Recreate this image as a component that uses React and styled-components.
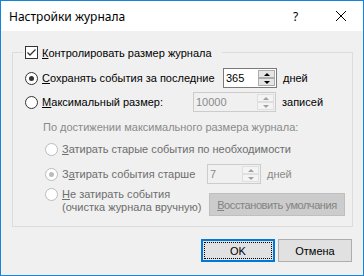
import React from "react";
import styled, { createGlobalStyle } from "styled-components";

const GlobalStyle = createGlobalStyle`
  html, body {
    margin: 0;
    padding: 0;
    background: #f0f0f0;
  }
  body {
    font-family: "Liberation Sans", Arial, sans-serif;
    font-size: 11px;
    color: #000;
  }
`;

const Window = styled.div`
  width: 364px;
  height: 276px;
  box-sizing: border-box;
  border: 1px solid #1883d7;
  background: #f0f0f0;
  display: flex;
  flex-direction: column;
`;

const TitleBar = styled.div`
  height: 30px;
  flex-shrink: 0;
  background: #ffffff;
  display: flex;
  align-items: center;
`;

const Title = styled.div`
  flex: 1;
  padding-left: 8px;
  font-family: "Segoe UI", "Noto Sans", sans-serif;
  font-size: 12px;
`;

const CaptionButton = styled.div`
  width: 45px;
  height: 30px;
  display: flex;
  align-items: center;
  justify-content: center;
  font-family: "Noto Sans", sans-serif;
  font-size: 12px;
`;

const Body = styled.div`
  flex: 1;
  padding: 15px 10px 0 11px;
  display: flex;
  flex-direction: column;
`;

const Group = styled.fieldset`
  margin: 0;
  padding: 0 0 10px 10px;
  border: 1px solid #dcdcdc;
  min-inline-size: 0;
`;

const Legend = styled.legend`
  padding: 0 10px 0 2px;
  height: 13px;
  display: flex;
  align-items: center;
  gap: 4px;
`;

const CheckBox = styled.span`
  width: 13px;
  height: 13px;
  box-sizing: border-box;
  border: 1px solid #333333;
  background: #ffffff;
  display: flex;
  align-items: center;
  justify-content: center;
`;

const RadioCircle = styled.span`
  width: 13px;
  height: 13px;
  flex-shrink: 0;
  box-sizing: border-box;
  border-radius: 50%;
  border: 1px solid ${p => (p.$disabled ? "#bcbcbc" : "#333333")};
  background: #ffffff;
  display: flex;
  align-items: center;
  justify-content: center;
  &::after {
    content: "";
    display: ${p => (p.$checked ? "block" : "none")};
    width: 5px;
    height: 5px;
    border-radius: 50%;
    background: ${p => (p.$disabled ? "#bcbcbc" : "#333333")};
  }
`;

const Row = styled.div`
  display: flex;
  align-items: ${p => p.$align || "center"};
  height: ${p => p.$h}px;
  margin-top: ${p => p.$mt}px;
  padding-left: ${p => p.$indent}px;
`;

const Choice = styled.div`
  display: flex;
  align-items: ${p => p.$align || "center"};
  gap: 4px;
  width: ${p => p.$w}px;
  color: ${p => (p.$disabled ? "#6d6d6d" : "#000000")};
  line-height: 13px;
`;

const Note = styled.div`
  margin-top: ${p => p.$mt}px;
  padding-left: 20px;
  line-height: 13px;
  color: #8a8a8a;
`;

const Spin = styled.div`
  width: ${p => p.$w}px;
  height: 20px;
  box-sizing: border-box;
  border: 1px solid ${p => (p.$disabled ? "#cccccc" : "#7a7a7a")};
  background: ${p => (p.$disabled ? "#f0f0f0" : "#ffffff")};
  display: flex;
`;

const SpinValue = styled.div`
  flex: 1;
  padding-left: 2px;
  line-height: 18px;
  color: ${p => (p.$disabled ? "#8a8a8a" : "#000000")};
`;

const SpinButtons = styled.div`
  width: 17px;
  padding: 1px 1px 1px 0;
  display: flex;
  flex-direction: column;
`;

const SpinButton = styled.div`
  flex: 1;
  box-sizing: border-box;
  border: 1px solid ${p => (p.$disabled ? "#dfdfdf" : "#adadad")};
  background: ${p => (p.$disabled ? "#f4f4f4" : "#e5e5e5")};
  display: flex;
  align-items: center;
  justify-content: center;
`;

const Arrow = styled.span`
  width: 0;
  height: 0;
  border-left: 3px solid transparent;
  border-right: 3px solid transparent;
  ${p => (p.$down ? "border-top" : "border-bottom")}: 3px solid
    ${p => (p.$disabled ? "#a0a0a0" : "#000000")};
`;

const Unit = styled.span`
  margin-left: 6px;
  color: ${p => (p.$disabled ? "#8a8a8a" : "#000000")};
`;

const Button = styled.button`
  width: ${p => p.$w}px;
  height: 23px;
  box-sizing: border-box;
  padding: 0;
  font: inherit;
  white-space: nowrap;
  color: #000000;
  background: #e1e1e1;
  border: 1px solid #adadad;
  &[data-default="true"] {
    border: 2px solid #0078d7;
    outline: 1px dotted #000000;
    outline-offset: -4px;
  }
  &:disabled {
    background: #cccccc;
    border-color: #bfbfbf;
    color: #838383;
    letter-spacing: -0.4px;
  }
`;

const RestoreButton = styled(Button)`
  align-self: flex-end;
`;

const ButtonBar = styled.div`
  display: flex;
  justify-content: flex-end;
  gap: 3px;
  margin-top: 12px;
  padding-right: 1px;
`;

function SpinBox({ value, disabled, width = 54 }) {
  return (
    <Spin $disabled={disabled} $w={width}>
      <SpinValue $disabled={disabled}>{value}</SpinValue>
      <SpinButtons>
        <SpinButton $disabled={disabled}>
          <Arrow $disabled={disabled} />
        </SpinButton>
        <SpinButton $disabled={disabled}>
          <Arrow $down $disabled={disabled} />
        </SpinButton>
      </SpinButtons>
    </Spin>
  );
}

export default function App() {
  return (
    <>
      <GlobalStyle />
      <Window>
        <TitleBar>
          <Title>Настройки журнала</Title>
          <CaptionButton>?</CaptionButton>
          <CaptionButton>
            <svg width="10" height="10" viewBox="0 0 10 10">
              <path d="M0 0L10 10M10 0L0 10" stroke="#000" strokeWidth="1" />
            </svg>
          </CaptionButton>
        </TitleBar>
        <Body>
          <Group>
            <Legend>
              <CheckBox>
                <svg width="11" height="11" viewBox="0 0 11 11">
                  <path d="M1.5 5.5L4 8L9.5 2.5" fill="none" stroke="#333" strokeWidth="1.3" />
                </svg>
              </CheckBox>
              <span>
                <u>К</u>онтролировать размер журнала
              </span>
            </Legend>

            <Row $h={20} $mt={9} $indent={2}>
              <Choice $w={198}>
                <RadioCircle $checked />
                <span>
                  <u>С</u>охранять события за последние
                </span>
              </Choice>
              <SpinBox value="365" />
              <Unit>дней</Unit>
            </Row>

            <Row $h={20} $mt={4} $indent={2}>
              <Choice $w={168}>
                <RadioCircle />
                <span>
                  <u>М</u>аксимальный размер:
                </span>
              </Choice>
              <SpinBox value="10000" disabled width={83} />
              <Unit>записей</Unit>
            </Row>

            <Note $mt={9}>По достижении максимального размера журнала:</Note>

            <Row $h={16} $mt={7} $indent={22}>
              <Choice $disabled>
                <RadioCircle $disabled />
                <span>
                  <u>З</u>атирать старые события по необходимости
                </span>
              </Choice>
            </Row>

            <Row $h={20} $mt={7} $indent={22}>
              <Choice $w={162} $disabled>
                <RadioCircle $disabled $checked />
                <span>
                  З<u>а</u>тирать события старше
                </span>
              </Choice>
              <SpinBox value="7" disabled />
              <Unit $disabled>дней</Unit>
            </Row>

            <Row $h={28} $mt={4} $indent={22} $align="flex-start">
              <Choice $w={164} $disabled $align="flex-start">
                <RadioCircle $disabled />
                <span>
                  <u>Н</u>е затирать события
                  <br />
                  (очистка журнала вручную)
                </span>
              </Choice>
              <RestoreButton $w={136} disabled>
                <u>В</u>осстановить умолчания
              </RestoreButton>
            </Row>
          </Group>

          <ButtonBar>
            <Button $w={74} data-default="true">
              OK
            </Button>
            <Button $w={74}>Отмена</Button>
          </ButtonBar>
        </Body>
      </Window>
    </>
  );
}
